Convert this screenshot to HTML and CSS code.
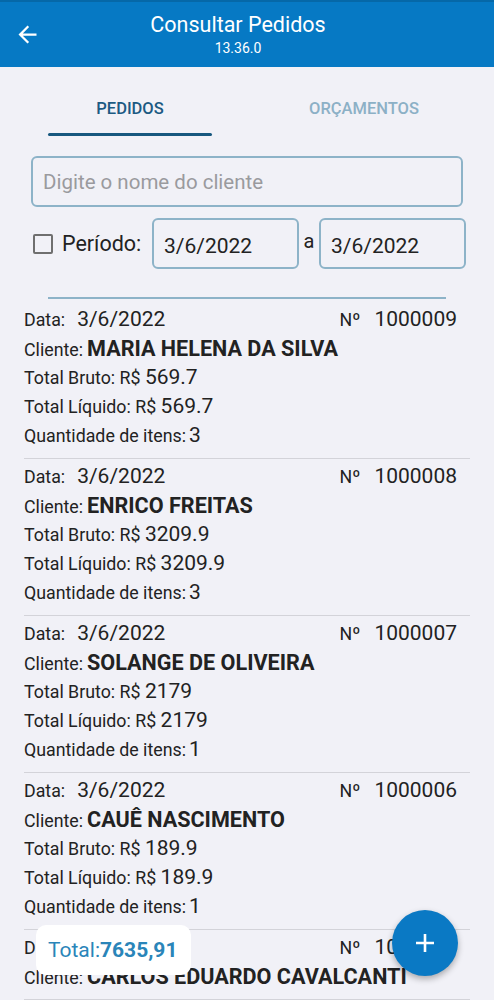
FILE: index.html
```html
<!DOCTYPE html>
<html lang="pt-BR">
<head>
    <meta charset="UTF-8" />
    <meta name="viewport" content="width=device-width, initial-scale=1.0"/>
    <title>Consultar Pedidos</title>
    <link rel="stylesheet" href="styles.css">
</head>
<body>
    <div id="app">
        <!-- App bar -->
        <header class="app-bar">
            <button class="back-btn" aria-label="Voltar">
                <svg width="27" height="27" viewBox="0 0 24 24">
                    <path d="M20 11H7.83l5.59-5.59L12 4l-8 8 8 8 1.41-1.41L7.83 13H20v-2z" fill="#fff"/>
                </svg>
            </button>
            <div class="app-title">
                <div class="title">Consultar Pedidos</div>
                <div class="version">13.36.0</div>
            </div>
            <div class="app-bar-spacer"></div>
        </header>

        <!-- Tabs -->
        <nav class="tabs">
            <div class="tab active">
                <span class="tab-label">PEDIDOS</span>
                <span class="tab-indicator"></span>
            </div>
            <div class="tab">
                <span class="tab-label">ORÇAMENTOS</span>
            </div>
        </nav>

        <!-- Filters -->
        <div class="search-box">Digite o nome do cliente</div>

        <div class="period-row">
            <span class="checkbox"></span>
            <span class="period-label">Período:</span>
            <span class="date-box">3/6/2022</span>
            <span class="date-sep">a</span>
            <span class="date-box">3/6/2022</span>
        </div>

        <div class="filter-line"></div>

        <!-- Orders -->
        <div class="order-list">
            <div class="order">
                <div class="line top">
                    <span><span class="lbl">Data:</span><span class="val date">3/6/2022</span></span>
                    <span><span class="lbl">Nº</span><span class="val num">1000009</span></span>
                </div>
                <div class="line"><span class="lbl">Cliente:</span><span class="client">MARIA HELENA DA SILVA</span></div>
                <div class="line"><span class="lbl">Total Bruto: R$ </span><span class="val">569.7</span></div>
                <div class="line"><span class="lbl">Total Líquido: R$ </span><span class="val">569.7</span></div>
                <div class="line"><span class="lbl">Quantidade de itens:</span><span class="val qty">3</span></div>
            </div>
            <div class="order">
                <div class="line top">
                    <span><span class="lbl">Data:</span><span class="val date">3/6/2022</span></span>
                    <span><span class="lbl">Nº</span><span class="val num">1000008</span></span>
                </div>
                <div class="line"><span class="lbl">Cliente:</span><span class="client">ENRICO FREITAS</span></div>
                <div class="line"><span class="lbl">Total Bruto: R$ </span><span class="val">3209.9</span></div>
                <div class="line"><span class="lbl">Total Líquido: R$ </span><span class="val">3209.9</span></div>
                <div class="line"><span class="lbl">Quantidade de itens:</span><span class="val qty">3</span></div>
            </div>
            <div class="order">
                <div class="line top">
                    <span><span class="lbl">Data:</span><span class="val date">3/6/2022</span></span>
                    <span><span class="lbl">Nº</span><span class="val num">1000007</span></span>
                </div>
                <div class="line"><span class="lbl">Cliente:</span><span class="client">SOLANGE DE OLIVEIRA</span></div>
                <div class="line"><span class="lbl">Total Bruto: R$ </span><span class="val">2179</span></div>
                <div class="line"><span class="lbl">Total Líquido: R$ </span><span class="val">2179</span></div>
                <div class="line"><span class="lbl">Quantidade de itens:</span><span class="val qty">1</span></div>
            </div>
            <div class="order">
                <div class="line top">
                    <span><span class="lbl">Data:</span><span class="val date">3/6/2022</span></span>
                    <span><span class="lbl">Nº</span><span class="val num">1000006</span></span>
                </div>
                <div class="line"><span class="lbl">Cliente:</span><span class="client">CAUÊ NASCIMENTO</span></div>
                <div class="line"><span class="lbl">Total Bruto: R$ </span><span class="val">189.9</span></div>
                <div class="line"><span class="lbl">Total Líquido: R$ </span><span class="val">189.9</span></div>
                <div class="line"><span class="lbl">Quantidade de itens:</span><span class="val qty">1</span></div>
            </div>
            <div class="order">
                <div class="line top">
                    <span><span class="lbl">Data:</span><span class="val date">3/6/2022</span></span>
                    <span><span class="lbl">Nº</span><span class="val num">1000005</span></span>
                </div>
                <div class="line"><span class="lbl">Cliente:</span><span class="client">CARLOS EDUARDO CAVALCANTI</span></div>
            </div>
        </div>

        <!-- Floating total + add button -->
        <div class="total-badge">Total:<b>7635,91</b></div>
        <button class="fab" aria-label="Novo pedido">
            <svg width="22" height="22" viewBox="0 0 22 22">
                <path d="M11 2v18M2 11h18" stroke="#fff" stroke-width="2.6"/>
            </svg>
        </button>
    </div>
</body>
</html>
```

FILE: styles.css
```css
body {
    margin: 0;
    padding: 0;
    background: #f1f1f7;
    font-family: Roboto, "Noto Sans", sans-serif;
    color: #222;
}

#app {
    position: relative;
    height: 1000px;
    overflow: hidden;
}

/* App bar */
.app-bar {
    display: flex;
    height: 67px;
    background: #0679c4;
    color: #fff;
    border-top: 2px solid #0568a8;
    box-sizing: border-box;
}

.back-btn {
    width: 56px;
    height: 65px;
    padding: 0 0 0 14px;
    border: 0;
    background: none;
    display: flex;
    align-items: center;
}

.app-title {
    flex: 1;
    text-align: center;
    padding-top: 10px;
}

.app-bar-spacer {
    width: 74px;
}

.title {
    font-size: 21.5px;
    line-height: 26px;
}

.version {
    font-size: 14px;
    line-height: 20px;
}

/* Tabs */
.tabs {
    display: grid;
    grid-template-columns: 1fr 1fr;
    margin: 0 13px;
    height: 70px;
}

.tab {
    display: flex;
    flex-direction: column;
    align-items: center;
}

.tab-label {
    padding-top: 31px;
    line-height: 22px;
    font-size: 16.5px;
    font-weight: 500;
    color: #8cb0c6;
}

.tab.active .tab-label {
    color: #1c5a83;
}

.tab-indicator {
    align-self: stretch;
    margin: auto 35px 1px;
    height: 3px;
    border-radius: 2px;
    background: #18587f;
}

/* Filters */
.search-box {
    margin: 19px 0 0 31px;
    width: 432px;
    height: 51px;
    box-sizing: border-box;
    border: 2px solid #8db3c8;
    border-radius: 6px;
    padding-left: 10px;
    display: flex;
    align-items: center;
    font-size: 20.5px;
    color: #9a9a9e;
}

.period-row {
    display: flex;
    align-items: center;
    margin-top: 11px;
    padding-left: 33px;
    height: 51px;
}

.checkbox {
    width: 20px;
    height: 20px;
    box-sizing: border-box;
    border: 2px solid #6f6f6f;
    border-radius: 2px;
    margin-right: 9px;
}

.period-label {
    font-size: 21.5px;
    width: 90px;
}

.date-box {
    width: 147px;
    height: 51px;
    box-sizing: border-box;
    border: 2px solid #8db3c8;
    border-radius: 6px;
    padding: 4px 0 0 10px;
    display: flex;
    align-items: center;
    font-size: 21px;
}

.date-sep {
    font-size: 20px;
    width: 20px;
    text-align: center;
    padding-bottom: 6px;
}

.filter-line {
    margin: 28px 48px 0;
    height: 1.5px;
    background: #8db3c8;
}

/* Order list */
.order-list {
    margin-top: 3px;
}

.order {
    margin: 0 24px;
    padding: 3px 0 8px;
    border-bottom: 1px solid #d3d3d9;
}

.line {
    height: 29px;
    line-height: 29px;
    white-space: nowrap;
}

.line.top {
    display: flex;
    justify-content: space-between;
    padding-right: 13px;
}

.lbl {
    font-size: 17.8px;
}

.val {
    font-size: 21px;
}

.val.date {
    margin-left: 12px;
}

.val.num {
    margin-left: 14px;
}

.val.qty {
    margin-left: 3px;
}

.client {
    margin-left: 4px;
    font-size: 21.6px;
    font-weight: 700;
}

/* Floating stuff */
.total-badge {
    position: absolute;
    left: 36px;
    top: 925px;
    width: 155px;
    height: 50px;
    box-sizing: border-box;
    padding-left: 12px;
    display: flex;
    align-items: center;
    background: #fff;
    border-radius: 10px;
    color: #2a85b9;
    font-size: 21px;
}

.fab {
    position: absolute;
    left: 392px;
    top: 910px;
    width: 66px;
    height: 66px;
    border: 0;
    border-radius: 50%;
    background: #0a79c4;
    box-shadow: 0 3px 6px rgba(0, 0, 0, 0.3);
    display: flex;
    align-items: center;
    justify-content: center;
}
```
